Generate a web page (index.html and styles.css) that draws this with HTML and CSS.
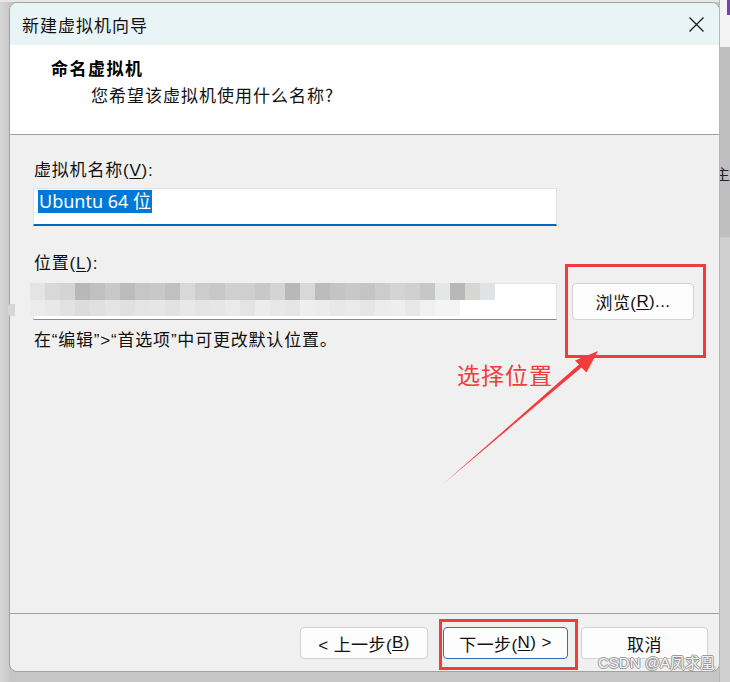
FILE: index.html
```html
<!DOCTYPE html>
<html lang="zh-CN">
<head>
<meta charset="utf-8">
<title>新建虚拟机向导</title>
<link rel="stylesheet" href="styles.css">
</head>
<body>
<div class="screen">
  <div class="left-edge"></div>
  <div class="dialog">
    <div class="titlebar">
      <span class="title">新建虚拟机向导</span>
      <svg class="close" width="15" height="15" viewBox="0 0 15 15"><path d="M0.5 0.5 L14.5 14.5 M14.5 0.5 L0.5 14.5" stroke="#1b1b1b" stroke-width="1.3" fill="none"/></svg>
    </div>
    <div class="header">
      <div class="header-title">命名虚拟机</div>
      <div class="header-sub">您希望该虚拟机使用什么名称?</div>
    </div>
    <div class="body">
      <div class="label">虚拟机名称(<u>V</u>):</div>
      <div class="input input-active"><span class="selected">Ubuntu 64 位</span></div>
      <div class="label label-loc">位置(<u>L</u>):</div>
      <div class="loc-row">
        <div class="input input-loc"></div>
        <button class="btn btn-browse">浏览(<u>R</u>)...</button>
      </div>
      <div class="hint">在“编辑”&gt;“首选项”中可更改默认位置。</div>
    </div>
    <div class="footer">
      <button class="btn btn-prev">&lt; 上一步(<u>B</u>)</button>
      <button class="btn btn-next">下一步(<u>N</u>) &gt;</button>
      <button class="btn btn-cancel">取消</button>
    </div>
  </div>
  <div class="right-edge">
    <div class="re-top"><div class="re-purple"></div></div>
    <div class="re-mid"><span class="re-text">主</span></div>
    <div class="re-bot"></div>
  </div>

  <div class="mosaic">
    <div class="mosaic-row mosaic-top"></div>
    <div class="mosaic-row mosaic-bottom"></div>
  </div>
  <div class="mosaic-notch"></div>

  <div class="red-box red-box-browse"></div>
  <div class="red-box red-box-next"></div>
  <div class="annot-text">选择位置</div>
  <svg class="arrow" width="730" height="682" viewBox="0 0 730 682">
    <polygon points="443,484 581.5,367.5 586.5,372.5 598,351 575,360.5 579,364.5" fill="#f23b3b"/>
  </svg>
  <div class="watermark">CSDN @A凤求凰</div>
</div>
</body>
</html>
```

FILE: styles.css
```css
* { box-sizing: border-box; }
html, body { margin: 0; padding: 0; }
body {
  width: 730px;
  height: 682px;
  overflow: hidden;
  background: #c4c4c4;
  font-family: "Liberation Sans", "Noto Sans CJK SC", sans-serif;
  color: #000;
}
.screen {
  position: relative;
  display: flex;
  width: 730px;
  height: 682px;
  background: linear-gradient(to bottom, #e6e6e6 0, #e6e6e6 2px, #c6c6c6 2px);
}
.left-edge {
  width: 9px;
  flex: none;
  background: linear-gradient(to right, #d6d6d6, #c9c9c9);
  margin-top: 2px;
}
.dialog {
  width: 711px;
  height: 670px;
  margin-top: 2px;
  flex: none;
  border: 1px solid #a2a2a2;
  border-radius: 8px;
  overflow: hidden;
  display: flex;
  flex-direction: column;
  background: #f0f0f0;
}
.titlebar {
  height: 42px;
  flex: none;
  background: #e9f4f6;
  display: flex;
  align-items: center;
  justify-content: space-between;
  padding: 0 15px 0 12px;
}
.title {
  font-family: "Noto Sans CJK SC", sans-serif;
  font-size: 17px;
  letter-spacing: 1px;
  color: #111;
}
.close { display: block; }
.header {
  height: 90px;
  flex: none;
  background: #fff;
  border-bottom: 1px solid #a0a0a0;
  padding: 11px 0 0 41px;
}
.header-title {
  font-family: "Noto Sans CJK SC", sans-serif;
  font-weight: 700;
  font-size: 17px;
  letter-spacing: 1.5px;
  line-height: 24px;
}
.header-sub {
  font-family: "Noto Sans CJK SC", sans-serif;
  font-size: 17px;
  letter-spacing: 1px;
  line-height: 24px;
  margin: 3px 0 0 40px;
  color: #111;
}
.body {
  flex: 1;
  padding: 24px 0 0 23px;
}
.label, .hint {
  font-size: 17px;
  line-height: 24px;
  letter-spacing: 0.8px;
  color: #111;
  padding-left: 1px;
}
.label u, .btn u { text-underline-offset: 2px; }
.input {
  width: 524px;
  background: #fff;
  border: 1px solid #e2e2e2;
}
.input-active {
  height: 38px;
  margin-top: 5px;
  border-bottom: 2px solid #0067c0;
  padding: 1px 0 0 4px;
}
.selected {
  display: inline-block;
  background: #0078d7;
  color: #fff;
  font-family: "Noto Sans", "Noto Sans CJK SC", sans-serif;
  font-size: 18px;
  line-height: 23px;
  height: 23px;
  padding: 0 1px;
}
.label-loc { margin-top: 26px; }
.loc-row {
  display: flex;
  align-items: flex-start;
  margin-top: 7px;
}
.input-loc {
  height: 37px;
  border-bottom: 1px solid #8a8a8a;
}
.hint {
  margin-top: 9px;
}
.btn {
  font-family: "Liberation Sans", "Noto Sans CJK SC", sans-serif;
  font-size: 17px;
  letter-spacing: 0.4px;
  color: #111;
  background: #fdfdfd;
  border: 1px solid #d2d2d2;
  border-radius: 4px;
  height: 32px;
  padding: 0;
  display: flex;
  align-items: center;
  justify-content: center;
}
.btn-browse {
  width: 122px;
  height: 37px;
  margin-left: 15px;
}
.footer {
  height: 58px;
  flex: none;
  border-top: 1px solid #a0a0a0;
  display: flex;
  justify-content: flex-end;
  align-items: flex-start;
  padding: 13px 11px 0 0;
}
.btn-prev { width: 128px; }
.btn-next { width: 125px; margin-left: 15px; border-color: #2b72c2; }
.btn-cancel { width: 127px; margin-left: 13px; }

.right-edge {
  flex: 1;
  display: flex;
  flex-direction: column;
  border-left: 1px solid #b6b6b6;
  margin-left: -1px;
  overflow: hidden;
}
.re-top {
  height: 47px;
  background: #f3f3f3;
  position: relative;
}
.re-purple {
  position: absolute;
  right: 0;
  top: 0;
  width: 3px;
  height: 15px;
  background: #7b3db0;
}
.re-mid {
  height: 190px;
  background: #bfbfbf;
  padding-top: 118px;
}
.re-text {
  display: block;
  font-family: "Noto Sans CJK SC", sans-serif;
  font-size: 15px;
  line-height: 18px;
  margin-left: -5px;
  color: #222;
}
.re-bot {
  flex: 1;
  background: #cfcfcf;
}

.mosaic {
  position: absolute;
  left: 30px;
  top: 283px;
  width: 465px;
  height: 33px;
}
.mosaic-row { height: 50%; }
.mosaic-top {
  background: linear-gradient(to right,
    #e4e4e4 0 15px, #d8d8d8 15px 30px, #d4d4d4 30px 45px, #b8b8b8 45px 60px,
    #c0c0c0 60px 75px, #c8c8c8 75px 90px, #bcbcbc 90px 105px, #c6c6c6 105px 120px,
    #c8c8c8 120px 135px, #c0c0c0 135px 150px, #d8d8d8 150px 165px, #cccccc 165px 180px,
    #c8c8c8 180px 195px, #d0d0d0 195px 210px, #cfcfcf 210px 225px, #c8c8c8 225px 240px,
    #d4d4d4 240px 255px, #b8b8b8 255px 270px, #d8d8d8 270px 285px, #bcbcbc 285px 300px,
    #c4c4c4 300px 315px, #c8c8c8 315px 330px, #c4c4c4 330px 345px, #cccccc 345px 360px,
    #d4d4d4 360px 375px, #d0d0d0 375px 390px, #c6c8c8 390px 405px, #e4e6e8 405px 420px,
    #b8b8b8 420px 435px, #d8d6d4 435px 450px, #dfe3e6 450px 465px);
}
.mosaic-bottom {
  width: 430px;
  background: linear-gradient(to right,
    #ececec 0 15px, #e8e8e8 15px 30px, #e2e2e2 30px 45px, #dcdcdc 45px 60px,
    #e0e0e0 60px 75px, #e4e4e4 75px 90px, #e0e0e0 90px 105px, #e4e4e4 105px 120px,
    #e6e6e6 120px 135px, #e2e2e2 135px 150px, #e8e8e8 150px 165px, #e4e4e4 165px 180px,
    #e6e6e6 180px 195px, #eaeaea 195px 210px, #e4e4e4 210px 225px, #ececec 225px 240px,
    #e8e8e8 240px 255px, #e6e6e6 255px 270px, #eeeeee 270px 285px, #ececec 285px 300px,
    #e8e8e8 300px 315px, #eaeaea 315px 330px, #e6e6e6 330px 345px, #ececec 345px 360px,
    #eeeeee 360px 375px, #e8e8e8 375px 390px, #f0f0f0 390px 405px, #f4f4f4 405px 430px);
}
.mosaic-notch {
  position: absolute;
  left: 8px;
  top: 304px;
  width: 7px;
  height: 12px;
  background: #d6d6d6;
  border-radius: 3px 0 0 3px;
}

.red-box {
  position: absolute;
  border: 3px solid #f23b3b;
}
.red-box-browse { left: 565px; top: 264px; width: 141px; height: 94px; }
.red-box-next { left: 439px; top: 619px; width: 139px; height: 51px; }
.annot-text {
  position: absolute;
  left: 457px;
  top: 359px;
  font-family: "Noto Sans CJK SC", sans-serif;
  font-size: 23px;
  line-height: 30px;
  letter-spacing: 1px;
  color: #f23b3b;
}
.arrow {
  position: absolute;
  left: 0;
  top: 0;
  pointer-events: none;
}
.watermark {
  position: absolute;
  left: 598px;
  top: 654px;
  font-family: "Liberation Sans", "Noto Sans CJK SC", sans-serif;
  font-size: 15px;
  line-height: 18px;
  color: #f2f2f2;
  text-shadow: 1px 0 0 #9a9a9a, -1px 0 0 #9a9a9a, 0 1px 0 #9a9a9a, 0 -1px 0 #9a9a9a;
}
```
